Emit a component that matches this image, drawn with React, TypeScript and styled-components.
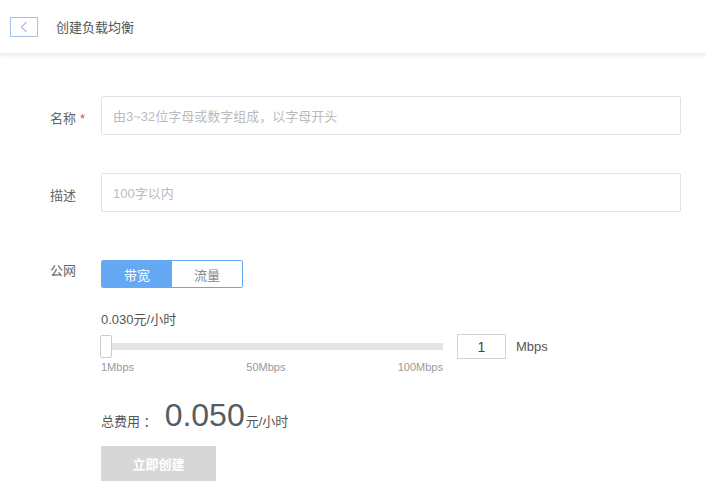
import React from "react";
import styled, { createGlobalStyle } from "styled-components";

const Global = createGlobalStyle`
  body { margin: 0; background: #fff; font-family: "Liberation Sans", "Noto Sans CJK SC", sans-serif; }
`;
const Header = styled.div`
  height: 54px; display: flex; align-items: center; padding-left: 10px;
  box-shadow: 0 2px 4px rgba(0,0,0,0.08); border-bottom: 1px solid #eee; box-sizing: border-box;
`;
const Back = styled.div`
  width: 28px; height: 20px; box-sizing: border-box; border: 1px solid #a9bfe0;
  display: flex; align-items: center; justify-content: center; margin-right: 18px;
`;
const Title = styled.div` font-size: 13px; color: #555; `;
const Form = styled.div` padding: 42px 25px 0 50px; `;
const Row = styled.div<{ $mb: number }>` display: flex; align-items: flex-start; margin-bottom: ${p => p.$mb}px; `;
const Label = styled.div<{ $pt: number }>`
  width: 51px; font-size: 13px; color: #666; padding-top: ${p => p.$pt}px; flex-shrink: 0;
`;
const Star = styled.span` color: #e44; margin-left: 4px; `;
const Input = styled.div`
  flex: 1; height: 39px; box-sizing: border-box; border: 1px solid #dde3ea; border-radius: 2px;
  display: flex; align-items: center; padding-left: 11px; font-size: 13px; color: #bbb;
`;
const Col = styled.div` display: flex; flex-direction: column; `;
const Toggle = styled.div`
  display: flex; width: 142px; height: 28px; box-sizing: border-box; border: 1px solid #65a9f5; border-radius: 2px; overflow: hidden;
`;
const Seg = styled.div<{ $on?: boolean }>`
  flex: 1; display: flex; align-items: center; justify-content: center; font-size: 13px;
  background: ${p => p.$on ? "#65a9f5" : "#fff"}; color: ${p => p.$on ? "#fff" : "#888"};
`;
const Price = styled.div` font-size: 13px; color: #555; margin-top: 21px; `;
const SliderRow = styled.div` display: flex; align-items: center; margin-top: 6px; `;
const SliderBox = styled.div` width: 342px; position: relative; height: 24px; display: flex; align-items: center; `;
const Track = styled.div` height: 7px; width: 100%; background: #e4e4e4; `;
const Handle = styled.div`
  position: absolute; left: -1px; top: 0; width: 12px; height: 23px; box-sizing: border-box;
  border: 1px solid #ccc; border-radius: 2px; background: #fff;
`;
const NumBox = styled.div`
  width: 49px; height: 25px; box-sizing: border-box; border: 1px solid #ccd5de; margin-left: 14px;
  display: flex; align-items: center; justify-content: center; font-size: 14px; color: #444;
`;
const Unit = styled.div` font-size: 13px; color: #555; margin-left: 10px; `;
const Scale = styled.div` width: 342px; display: flex; justify-content: space-between; font-size: 11px; color: #999; margin-top: 2px; `;
const Total = styled.div` display: flex; align-items: baseline; margin-top: 24px; margin-left: 51px; color: #555; font-size: 13px; `;
const Big = styled.span` font-size: 32px; color: #555d63; margin: 0 1px 0 8px; `;
const Button = styled.div`
  margin: 12px 0 0 51px; width: 115px; height: 35px; background: #d7d7d7; color: #fff;
  display: flex; align-items: center; justify-content: center; font-size: 13px; font-weight: bold;
`;

export default function App() {
  return (
    <>
      <Global />
      <Header>
        <Back>
          <svg width="8" height="12" viewBox="0 0 8 12"><path d="M6.5 1 L1.5 6 L6.5 11" fill="none" stroke="#a9bfe0" strokeWidth="1.2" /></svg>
        </Back>
        <Title>创建负载均衡</Title>
      </Header>
      <Form>
        <Row $mb={38}>
          <Label $pt={12}>名称<Star>*</Star></Label>
          <Input>由3~32位字母或数字组成，以字母开头</Input>
        </Row>
        <Row $mb={48}>
          <Label $pt={12}>描述</Label>
          <Input>100字以内</Input>
        </Row>
        <Row $mb={0}>
          <Label $pt={0}>公网</Label>
          <Col>
            <Toggle><Seg $on>带宽</Seg><Seg>流量</Seg></Toggle>
            <Price>0.030元/小时</Price>
            <SliderRow>
              <SliderBox><Track /><Handle /></SliderBox>
              <NumBox>1</NumBox>
              <Unit>Mbps</Unit>
            </SliderRow>
            <Scale><span>1Mbps</span><span>50Mbps</span><span>100Mbps</span></Scale>
          </Col>
        </Row>
        <Total>总费用 ：<Big>0.050</Big>元/小时</Total>
        <Button>立即创建</Button>
      </Form>
    </>
  );
}
